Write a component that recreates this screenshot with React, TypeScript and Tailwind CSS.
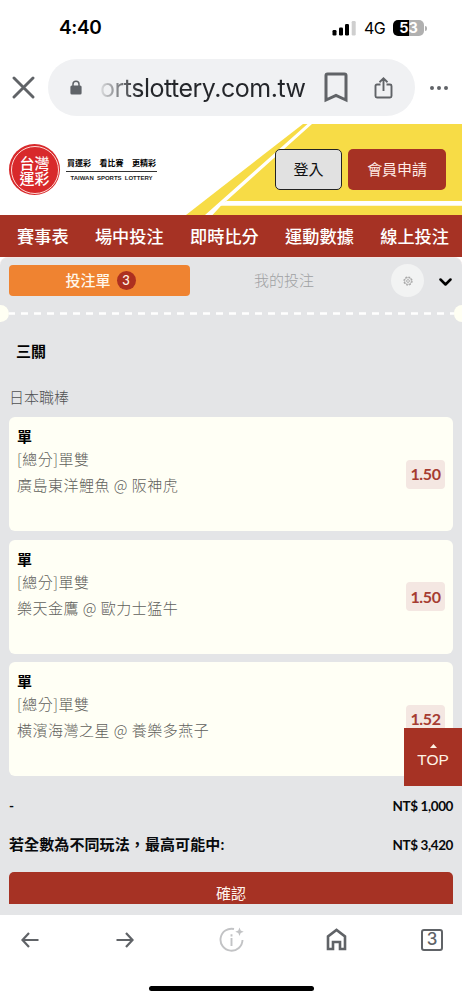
import { FiMoreHorizontal } from "react-icons/fi";

type Pick = {
  result: string;
  market: string;
  match: string;
  odds: string;
};

const navItems = ["賽事表", "場中投注", "即時比分", "運動數據", "線上投注"];

const picks: Pick[] = [
  { result: "單", market: "[總分]單雙", match: "廣島東洋鯉魚 @ 阪神虎", odds: "1.50" },
  { result: "單", market: "[總分]單雙", match: "樂天金鷹 @ 歐力士猛牛", odds: "1.50" },
  { result: "單", market: "[總分]單雙", match: "橫濱海灣之星 @ 養樂多燕子", odds: "1.52" },
];

const StatusBar = () => (
  <div className="flex h-[59px] shrink-0 items-start justify-between pl-[59px] pr-[35px] pt-[16px] font-['Inter',sans-serif]">
    <span className="text-[19px] leading-6 font-semibold tracking-[-0.4px] text-black">4:40</span>
    <div className="flex h-6 items-center">
      <svg className="h-[16px] w-[24px]" viewBox="0 0 24 16">
        <rect x="0.5" y="10" width="4" height="5.500" rx="1.200" />
        <rect x="7" y="7.500" width="4" height="8" rx="1.200" />
        <rect x="13" y="4" width="4" height="11.500" rx="1.200" />
        <rect x="19.700" y="1" width="4" height="14.500" rx="1.200" fill="#cfcfcf" />
      </svg>
      <span className="ml-[8px] w-[22px] text-[16px] leading-6 tracking-[-0.5px] text-black">4G</span>
      <div className="ml-[7px] flex h-[16px] w-[31px] items-center justify-center rounded-[5px] bg-linear-to-r from-black from-50% to-[#b0b0b0] to-50% text-[14.5px] font-bold text-white">
        53
      </div>
      <span className="ml-px h-[5px] w-[2px] rounded-r bg-[#b0b0b0]" />
    </div>
  </div>
);

const AddressBar = () => (
  <div className="flex h-[65px] shrink-0 items-start font-['Inter',sans-serif]">
    <div className="flex h-[57px] w-[48px] items-center pl-[12px]">
      <svg className="size-[23px]" viewBox="0 0 23 23" fill="none" stroke="#606367" strokeWidth="2.900" strokeLinecap="round">
        <path d="M2 2l19 19M21 2L2 21" />
      </svg>
    </div>
    <div className="flex h-[57px] w-[367px] items-center rounded-full bg-[#f0f1f3] pl-[22px]">
      <svg className="h-[15px] w-[12px]" viewBox="0 0 12 15">
        <path d="M3 6V4.200a3 3 0 0 1 6 0V6" fill="none" stroke="#5f6368" strokeWidth="1.500" />
        <rect x="0.400" y="5.500" width="11.200" height="9" rx="1.500" fill="#5f6368" />
      </svg>
      <span className="ml-[18px] w-[208px] bg-linear-to-r from-[#dfe0e2] to-[#24262a] to-[19%] bg-clip-text text-[25px] leading-[34px] tracking-[-0.5px] whitespace-nowrap text-transparent">
        ortslottery.com.tw
      </span>
      <svg className="ml-[16px] h-[31px] w-[24px]" viewBox="0 0 24 31" fill="none" stroke="#606367" strokeWidth="3">
        <path d="M2 28V3.500Q2 2 3.500 2h17Q22 2 22 3.500V28l-10-4.500z" />
      </svg>
      <svg className="ml-[26px] h-[22px] w-[19px]" viewBox="0 0 19 22" fill="none" stroke="#606367" strokeWidth="1.900">
        <path d="M6.500 7.500H3Q1.500 7.500 1.500 9v10Q1.500 20.500 3 20.500h13q1.500 0 1.500-1.500V9q0-1.500-1.500-1.500h-3.500M9.500 14V1.500M5.500 5.200l4-3.800 4 3.800" />
      </svg>
    </div>
    <div className="flex h-[57px] w-[47px] items-center justify-center">
      <FiMoreHorizontal className="size-[24px] fill-[#606367] text-[#606367]" />
    </div>
  </div>
);

const Logo = () => (
  <div className="relative flex items-center">
    <div className="flex size-[51px] items-center justify-center rounded-full bg-[#d8292b] p-[1.5px]">
      <div className="flex size-full flex-col items-center justify-center rounded-full border border-[#ffd9d5] text-[15px] font-medium text-white">
        <span className="flex h-[15px] items-center leading-none">台灣</span>
        <span className="flex h-[15px] items-center leading-none">運彩</span>
      </div>
    </div>
    <div className="ml-[6px] flex w-[91px] flex-col items-center">
      <div className="flex w-full justify-between border-b border-[#333] px-[1px] pb-[2px] text-[8px] leading-[12px] font-bold text-black">
        <span>買運彩</span>
        <span>看比賽</span>
        <span>更精彩</span>
      </div>
      <span className="pt-[2px] font-['Liberation_Sans',sans-serif] text-[6px] leading-[8px] font-bold whitespace-nowrap text-[#222] [word-spacing:1.5px]">
        TAIWAN SPORTS LOTTERY
      </span>
    </div>
  </div>
);

const Header = () => (
  <header className="relative flex h-[91px] shrink-0 items-center justify-between pl-[9px] pr-[16px]">
    {/* Field lines behind the buttons */}
    <svg className="absolute inset-0 h-[91px] w-[462px]" viewBox="0 0 462 91">
      <path d="M303 0H462V91H186z" fill="#f7dc46" />
      <path d="M307.500 0H312L221 81.700L212.500 91H205z" fill="#fff" />
      <path d="M226.500 77H462V81.700H218z" fill="#fff" />
    </svg>
    <Logo />
    <div className="relative flex gap-[6px] text-[15px] tracking-[-0.1px]">
      <button className="h-[41px] w-[67px] rounded-[5px] border border-[#222] bg-[#e1e1e1] text-[#111]">登入</button>
      <button className="h-[41px] w-[98px] rounded-[5px] bg-[#a63224] text-[#ffece7]">會員申請</button>
    </div>
  </header>
);

const NavBar = () => (
  <nav className="flex h-[42px] shrink-0 items-center justify-between bg-[#a63224] pl-[17px] pr-[13px] text-[17.2px] font-medium text-white">
    {navItems.map((item) => (
      <span key={item}>{item}</span>
    ))}
  </nav>
);

const SlipTabs = () => (
  <div className="flex h-[31px] items-center px-[9px]">
    <button className="flex h-full w-[181px] items-center justify-center gap-[6px] rounded-[4px] bg-[#ef8331] pl-[2px] text-[15px] font-medium text-[#fff7ea]">
      投注單
      <span className="flex size-[19px] items-center justify-center rounded-full bg-[#ad3020] font-['Lato',sans-serif] text-[13px]">3</span>
    </button>
    <span className="w-[188px] text-center text-[15px] font-light text-[#9fa1a3]">我的投注</span>
    <span className="ml-[13px] flex size-[33px] shrink-0 items-center justify-center rounded-full bg-[#f2f3f3]">
      <svg className="size-[10px]" viewBox="0 0 10 10" fill="none" stroke="#a9a9a9">
        <circle cx="5" cy="5" r="4" strokeWidth="1.300" strokeDasharray="1.800 1.342" />
        <circle cx="5" cy="5" r="3.400" strokeWidth="0.700" />
        <circle cx="5" cy="5" r="1.400" strokeWidth="0.900" />
      </svg>
    </span>
    <svg className="ml-[15px] mt-[3px] h-[8px] w-[13px] shrink-0" viewBox="0 0 13 8" fill="none" stroke="#000" strokeWidth="2.500" strokeLinecap="round" strokeLinejoin="round">
      <path d="M1.500 1.500l5 5 5-5" />
    </svg>
  </div>
);

// Perforated edge of the ticket
const Perforation = () => (
  <div className="mt-[9px] flex h-[17px] items-center justify-between">
    <span className="h-[17px] w-[8.5px] rounded-r-full bg-[#fffff3]" />
    <svg className="h-[3px] w-[445px]" viewBox="0 0 445 3">
      <path d="M-1 1.500H446" stroke="#fff" strokeWidth="2.400" strokeDasharray="7 6" />
    </svg>
    <span className="h-[17px] w-[8.5px] rounded-l-full bg-[#fffff3]" />
  </div>
);

const PickCard = ({ pick }: { pick: Pick }) => (
  <div className="flex h-[114px] items-center justify-between rounded-[6px] bg-[#fffff5] pl-[8px] pr-[8px]">
    <div className="flex h-full flex-col pt-[7px] text-[15px] text-[#5f5f5c]">
      <span className="leading-[23px] font-bold text-black">{pick.result}</span>
      <span className="leading-[24px] font-light tracking-[0.5px]">{pick.market}</span>
      <span className="leading-[28px] font-light tracking-[0.5px]">{pick.match}</span>
    </div>
    <span className="flex h-[29px] w-[39px] items-center justify-center rounded-[4px] bg-[#f4e7e2] font-['Lato',sans-serif] text-[16px] font-bold tracking-[-0.4px] text-[#a63c31]">
      {pick.odds}
    </span>
  </div>
);

const BetSlip = () => (
  <main className="relative flex h-[658px] shrink-0 flex-col overflow-hidden rounded-t-[8px] border-t border-[#f3e5e3] bg-[#e4e5e7] pt-[7px]">
    <SlipTabs />
    <Perforation />
    <h1 className="mt-[18px] pl-[16px] text-[15px] leading-[22px] font-bold text-black">三關</h1>
    <h2 className="mt-[24px] pl-[9px] text-[15px] leading-[22px] font-light text-[#505153]">日本職棒</h2>
    <div className="mt-[9px] flex flex-col gap-[8.5px] px-[9px]">
      {picks.map((pick) => (
        <PickCard key={pick.match} pick={pick} />
      ))}
    </div>
    <div className="flex flex-col px-[9px] pt-[11px] font-['Lato','Noto_Sans_CJK_TC',sans-serif] text-[13.5px] font-bold text-[#080a0d]">
      <div className="flex h-[39px] items-center justify-between">
        <span>-</span>
        <span className="tracking-[-0.4px]">NT$ 1,000</span>
      </div>
      <div className="flex h-[39px] items-center justify-between">
        <span className="pb-[2px] text-[15px] tracking-[0.1px]">若全數為不同玩法，最高可能中:</span>
        <span className="tracking-[-0.4px]">NT$ 3,420</span>
      </div>
    </div>
    {/* Confirm button is cut off by the browser toolbar */}
    <div className="mx-[9px] mt-[7px] h-[32px] shrink-0 overflow-hidden">
      <button className="h-[43px] w-full rounded-[5px] bg-[#a63224] text-[15px] text-[#fff5ed]">確認</button>
    </div>
    <button className="absolute top-[470px] right-0 flex h-[58px] w-[58px] flex-col items-center bg-[#a63224] pt-[16px] text-[#fff3e4]">
      <svg className="h-[4px] w-[7px]" viewBox="0 0 7 4" fill="#fff3e4">
        <path d="M3.500 0L7 4H0z" />
      </svg>
      <span className="mt-[2px] font-['Liberation_Sans',sans-serif] text-[15.5px] leading-[20px]">TOP</span>
    </button>
  </main>
);

const BottomBar = () => (
  <footer className="flex h-[85px] shrink-0 flex-col items-center bg-white">
    <div className="flex h-[49px] w-full items-center pl-[21px]">
      <svg className="h-[16px] w-[18px]" viewBox="0 0 18 16" fill="none" stroke="#606367" strokeWidth="2.200">
        <path d="M17.500 8H1.500M8 1L1.500 8 8 15" />
      </svg>
      <svg className="ml-[77px] h-[16px] w-[18px]" viewBox="0 0 18 16" fill="none" stroke="#606367" strokeWidth="2.200">
        <path d="M0.500 8h16M10 1l6.500 7-6.500 7" />
      </svg>
      <svg className="ml-[85px] size-[25px]" viewBox="0 0 25 25" fill="none" stroke="#c2c3c5" strokeWidth="1.900">
        <path d="M15 2A11 11 0 1 0 23.500 13" />
        <path d="M12.500 11v8M12.500 7.200v2.200" />
        <path d="M20.500 0.500l1.200 3 3 1.200-3 1.200-1.200 3-1.200-3-3-1.200 3-1.200z" fill="#c2c3c5" stroke="none" />
      </svg>
      <svg className="ml-[82px] h-[23px] w-[21px]" viewBox="0 0 21 23" fill="none" stroke="#606367" strokeWidth="2.600">
        <path d="M2 21V8.500l8.500-6.500L19 8.500V21h-5v-7H7v7z" />
      </svg>
      <div className="ml-[74px] flex size-[22px] items-center justify-center rounded-[3px] border-2 border-[#606367] font-['Inter',sans-serif] text-[17px] leading-none font-medium text-[#606367]">
        3
      </div>
    </div>
    <span className="mt-[22px] h-[5px] w-[165px] rounded-full bg-black" />
  </footer>
);

const App = () => {
  return (
    <div className="flex h-[1000px] w-[462px] flex-col overflow-hidden bg-white font-['Noto_Sans_CJK_TC',sans-serif]">
      <StatusBar />
      <AddressBar />
      <Header />
      <NavBar />
      <BetSlip />
      <BottomBar />
    </div>
  );
};

export default App;
